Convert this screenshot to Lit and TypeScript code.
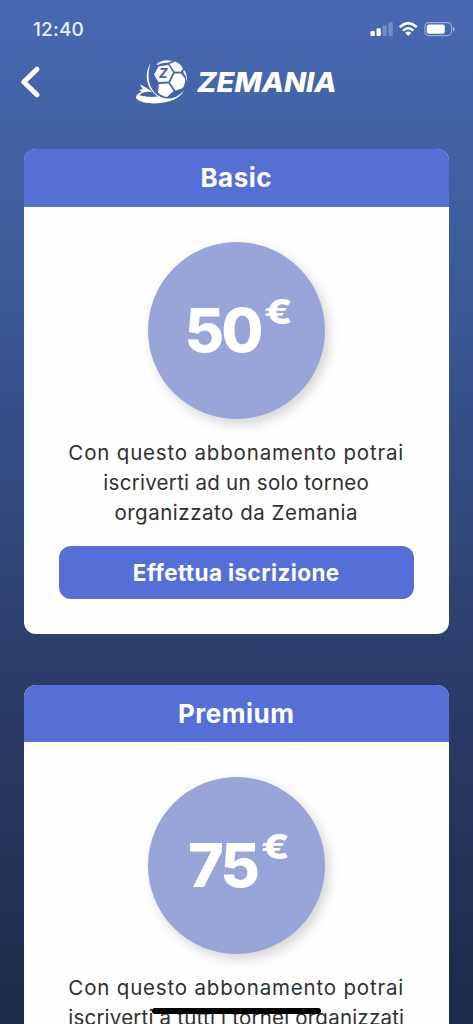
import { LitElement, html, css } from "lit";
import { customElement, property } from "lit/decorators.js";
import { styleMap } from "lit/directives/style-map.js";

interface Line {
  text: string;
  tracking: number;
}

interface Plan {
  name: string;
  price: number;
  lines: Line[];
}

const PLANS: Plan[] = [
  {
    name: "Basic",
    price: 50,
    lines: [
      { text: "Con questo abbonamento potrai", tracking: 0.82 },
      { text: "iscriverti ad un solo torneo", tracking: 0.27 },
      { text: "organizzato da Zemania", tracking: 0.52 },
    ],
  },
  {
    name: "Premium",
    price: 75,
    lines: [
      { text: "Con questo abbonamento potrai", tracking: 0.82 },
      { text: "iscriverti a tutti i tornei organizzati", tracking: 0.21 },
    ],
  },
];

@customElement("status-bar")
class StatusBar extends LitElement {
  static styles = css`
    :host {
      display: flex;
      justify-content: space-between;
      height: 58px;
      padding: 0 18px 0 33px;
      box-sizing: border-box;
      color: #e9f0ff;
    }
    .time {
      font: 500 19px/22px Inter, "Liberation Sans", sans-serif;
      letter-spacing: 0.2px;
      padding-top: 19px;
    }
    .icons {
      width: 86px;
      height: 16px;
      margin-top: 21px;
    }
  `;

  render() {
    return html`
      <span class="time">12:40</span>
      <svg class="icons" viewBox="369 21 86 16" fill="#fff">
        <rect x="370.5" y="31" width="4.3" height="5" rx="1.2" />
        <rect x="376.5" y="28.3" width="4.3" height="7.7" rx="1.2" />
        <rect x="382.5" y="25.3" width="4.3" height="10.7" rx="1.2" opacity=".25" />
        <rect x="388.5" y="22.3" width="4.3" height="13.7" rx="1.2" opacity=".25" />
        <g fill="none" stroke="#fff" stroke-width="2.5">
          <path d="M399.7 27.2Q408.2 19.4 416.7 27.2" />
          <path d="M403 30.6Q408.2 26 413.4 30.6" />
        </g>
        <path d="M408.2 36l-3.1-3.2q3.1-2.5 6.2 0z" />
        <rect x="424.9" y="22.6" width="26.6" height="13" rx="4" fill="none" stroke="#fff" stroke-opacity=".45" stroke-width="1.2" />
        <rect x="426.8" y="24.4" width="18" height="9.4" rx="2.2" />
        <path d="M453 26.8q1.8.9 1.8 2.4t-1.8 2.4z" opacity=".5" />
      </svg>
    `;
  }
}

@customElement("nav-bar")
class NavBar extends LitElement {
  static styles = css`
    :host {
      display: flex;
      height: 48px;
      padding-left: 20px;
    }
    .back {
      width: 22px;
      height: 34px;
      margin-top: 7px;
    }
    .logo {
      width: 204px;
      height: 48px;
      margin-left: 93px;
    }
    .wordmark {
      font: italic 800 27.5px Inter, "Liberation Sans", sans-serif;
    }
  `;

  render() {
    return html`
      <svg class="back" viewBox="20 65 22 34" fill="none" stroke="#fff" stroke-width="5" stroke-linecap="round" stroke-linejoin="round">
        <path d="M37 69.2L23.8 82L37 94.700" />
      </svg>
      <svg class="logo" viewBox="135 58 204 48" fill="#fff">
        <path d="M150.5 63.5C143.5 74 146.5 89 158 96.5C150 97.500 142 96.500 139.500 95C143 91.500 149 91.300 152 92.500C150.500 90.500 149 89.300 147.500 88.500L140 84.300L142.800 89.500L139 89.800L141.500 92C137 93.500 135.300 96.500 136.500 98.800C140 103 152 104.500 162 102.800C172 101.500 180.500 97.500 185 89.500C180 95.500 173.500 99 166.500 98.500C153 97 144.500 82 150.500 63.500Z" />
        <path d="M156.500 64.200C160 60.600 167.500 59.300 171.800 61L168 62.800C164 62.600 160.500 63.500 158 65Z" />
        <path d="M158.500 66.500L168.300 65L173 72.500L168.500 81.500L158.500 82L154 74.500Z" />
        <path d="M169.500 64L175 61.600C179 63 181.500 65.500 183 68.800L180.500 71.800L174.300 71.500Z" />
        <path d="M174.500 73.500L181 73.500L185 78.500C185.500 82 184.500 85.500 182.500 88.300L175.500 90.500L170 82.800Z" />
        <path d="M158.800 84L168.500 83.500L173.500 91L167 97C163.500 96.500 160.500 95 158 92.500Z" />
        <path d="M183 71.800L184.300 70C186.500 73.500 187.500 78 186.800 81.500L185.800 76.500Z" />
        <text x="163.300" y="78.200" text-anchor="middle" font-family="Inter, sans-serif" font-style="italic" font-weight="800" font-size="12.500" fill="#4764ab">Z</text>
        <text class="wordmark" x="197" y="92.300" textLength="139.500" lengthAdjust="spacingAndGlyphs">ZEMANIA</text>
      </svg>
    `;
  }
}

@customElement("plan-card")
class PlanCard extends LitElement {
  @property({ attribute: false }) plan!: Plan;

  static styles = css`
    :host {
      display: flex;
      flex-direction: column;
      height: 484.5px;
      border-radius: 12px;
      overflow: hidden;
      background: #fefefe;
      color: #fff;
      flex: none;
    }
    .title {
      height: 57.5px;
      background: #566fd6;
      font-size: 26px;
      font-weight: 700;
      line-height: 57px;
      text-align: center;
      letter-spacing: 0.5px;
    }
    .body {
      display: flex;
      flex-direction: column;
      align-items: center;
      padding: 35px 35px 0;
    }
    .disc {
      display: flex;
      justify-content: center;
      width: 177px;
      height: 177px;
      border-radius: 50%;
      background: #99a4d8;
      box-shadow: 4px 5px 12px rgba(0, 0, 0, 0.17);
    }
    .amount {
      font-size: 61px;
      font-weight: 800;
      line-height: 177px;
      letter-spacing: -3px;
    }
    .currency {
      font-size: 34px;
      font-weight: 800;
      line-height: 140px;
      margin-left: 4px;
      transform: scaleX(1.22);
      transform-origin: left;
    }
    .text {
      margin-top: 19px;
      height: 91px;
      color: #303033;
      font-size: 20.5px;
      line-height: 30.3px;
      text-align: center;
    }
    .line {
      display: block;
      white-space: nowrap;
    }
    .action {
      align-self: stretch;
      height: 53px;
      margin-top: 17px;
      border: 0;
      border-radius: 12px;
      background: #566fd6;
      color: #fff;
      font: inherit;
      font-size: 22.5px;
      font-weight: 700;
      letter-spacing: 0.4px;
      padding: 0;
    }
  `;

  render() {
    const { name, price, lines } = this.plan;
    return html`
      <div class="title">${name}</div>
      <div class="body">
        <div class="disc">
          <span class="amount">${price}</span><span class="currency">€</span>
        </div>
        <div class="text">
          ${lines.map(
            (l) => html`<span class="line" style=${styleMap({ letterSpacing: `${l.tracking}px` })}>${l.text}</span>`
          )}
        </div>
        <button class="action">Effettua iscrizione</button>
      </div>
    `;
  }
}

@customElement("app-root")
class AppRoot extends LitElement {
  static styles = css`
    :host {
      display: block;
      position: relative;
      height: 1024px;
      overflow: hidden;
      font-family: Inter, "Liberation Sans", sans-serif;
      background: linear-gradient(#4868b3 0, #4262a4 150px, #3b5997 310px, #355088 410px, #2c406d 640px, #1d2a49 1024px);
    }
    .plans {
      display: flex;
      flex-direction: column;
      gap: 51px;
      padding: 43px 24px 0 23.5px;
    }
    .home-indicator {
      position: absolute;
      left: 152px;
      bottom: 10px;
      width: 169px;
      height: 6px;
      border-radius: 3px;
      background: #000;
    }
  `;

  render() {
    return html`
      <status-bar></status-bar>
      <nav-bar></nav-bar>
      <div class="plans">${PLANS.map((p) => html`<plan-card .plan=${p}></plan-card>`)}</div>
      <div class="home-indicator"></div>
    `;
  }
}
